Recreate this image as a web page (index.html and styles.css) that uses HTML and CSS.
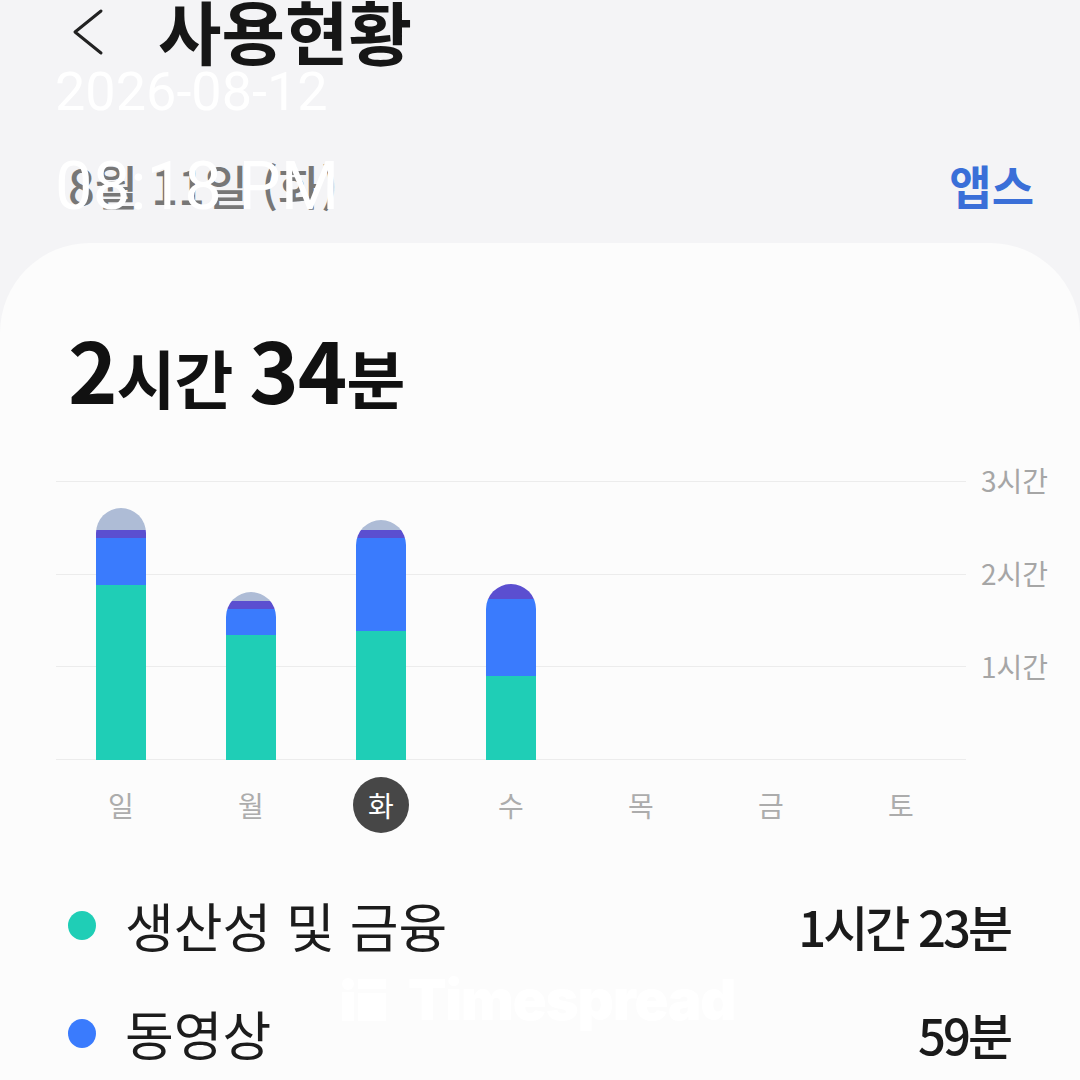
FILE: index.html
```html
<!DOCTYPE html>
<html lang="ko">
<head>
  <meta charset="UTF-8">
  <title>사용현황</title>
  <link rel="stylesheet" href="styles.css">
</head>
<body>
  <header class="topbar">
    <svg class="back" width="36" height="50" viewBox="0 0 36 50">
      <polyline points="31,4 5,25 31,46" fill="none" stroke="#222" stroke-width="3" stroke-linecap="round" stroke-linejoin="round"/>
    </svg>
    <h1>사용현황</h1>
  </header>

  <div class="daterow">
    <span class="date">8월 11일 (화)</span>
    <span class="apps">앱스</span>
  </div>

  <div class="stamp">
    <div class="stamp-date">2026-08-12</div>
    <div class="stamp-time">08:18 PM</div>
  </div>

  <main class="card">
    <div class="total"><span class="num">2</span>시간 <span class="num">34</span>분</div>

    <div class="chart">
      <div class="plot">
        <div class="col">
          <div class="bar">
            <div class="seg other" style="height:22px"></div>
            <div class="seg social" style="height:8px"></div>
            <div class="seg video" style="height:47px"></div>
            <div class="seg work" style="height:175px"></div>
          </div>
        </div>
        <div class="col">
          <div class="bar">
            <div class="seg other" style="height:9px"></div>
            <div class="seg social" style="height:8px"></div>
            <div class="seg video" style="height:26px"></div>
            <div class="seg work" style="height:125px"></div>
          </div>
        </div>
        <div class="col">
          <div class="bar">
            <div class="seg other" style="height:10px"></div>
            <div class="seg social" style="height:8px"></div>
            <div class="seg video" style="height:93px"></div>
            <div class="seg work" style="height:129px"></div>
          </div>
        </div>
        <div class="col">
          <div class="bar">
            <div class="seg social" style="height:15px"></div>
            <div class="seg video" style="height:77px"></div>
            <div class="seg work" style="height:84px"></div>
          </div>
        </div>
        <div class="col"></div>
        <div class="col"></div>
        <div class="col"></div>
      </div>
      <div class="axis">
        <span>3시간</span>
        <span>2시간</span>
        <span>1시간</span>
      </div>
    </div>

    <div class="days">
      <span>일</span>
      <span>월</span>
      <span class="today">화</span>
      <span>수</span>
      <span>목</span>
      <span>금</span>
      <span>토</span>
    </div>

    <ul class="legend">
      <li>
        <span class="dot work"></span>
        <span class="name">생산성 및 금융</span>
        <span class="time">1시간 23분</span>
      </li>
      <li>
        <span class="dot video"></span>
        <span class="name">동영상</span>
        <span class="time">59분</span>
      </li>
    </ul>

    <div class="watermark">
      <svg width="46" height="44" viewBox="0 0 46 44">
        <circle cx="6" cy="6" r="6" fill="#fff"/>
        <rect x="0" y="14" width="12" height="29" fill="#fff"/>
        <rect x="16" y="1" width="28" height="10" fill="#fff"/>
        <rect x="16" y="15" width="28" height="28" fill="#fff"/>
      </svg>
      <span>Timespread</span>
    </div>
  </main>
</body>
</html>
```

FILE: styles.css
```css
body {
  margin: 0;
  background: #f4f4f6;
  font-family: 'Noto Sans CJK KR', 'Noto Sans', sans-serif;
  color: #1f1f1f;
  width: 1080px;
  height: 1080px;
  overflow: hidden;
  position: relative;
}

.topbar {
  display: flex;
  align-items: center;
  gap: 54px;
  padding-left: 70px;
  height: 66px;
}

.back {
  display: block;
  margin-top: -2px;
}

h1 {
  margin: -6px 0 0 -2px;
  font-size: 69px;
  font-weight: 700;
  line-height: 66px;
  color: #161616;
}

.daterow {
  display: flex;
  justify-content: space-between;
  align-items: center;
  padding: 0 46px 0 70px;
  margin-top: 86px;
  height: 64px;
}

.date {
  font-size: 47px;
  font-weight: 500;
  color: #777;
  margin-left: -2px;
}

.apps {
  font-size: 46px;
  font-weight: 700;
  color: #3a6fd8;
}

.stamp {
  position: absolute;
  left: 55px;
  top: 62px;
  color: #fff;
  font-family: Roboto, sans-serif;
  font-weight: 400;
}

.stamp-date {
  font-size: 54px;
  line-height: 60px;
}

.stamp-time {
  font-size: 67px;
  line-height: 76px;
  margin-top: 26px;
}

.card {
  margin-top: 27px;
  background: #fcfcfc;
  border-radius: 90px 90px 0 0;
  height: 900px;
  padding-top: 75px;
  box-sizing: border-box;
  position: relative;
}

.total {
  padding-left: 68px;
  font-size: 64px;
  font-weight: 700;
  line-height: 100px;
  color: #111;
  letter-spacing: -1px;
}

.total .num {
  font-size: 84px;
}

.chart {
  display: flex;
  margin-top: 55px;
  padding-left: 56px;
}

.plot {
  display: grid;
  grid-template-columns: repeat(7, 130px);
  align-items: end;
  height: 279px;
  background: repeating-linear-gradient(to bottom, #ececec 0, #ececec 1px, transparent 1px, transparent 92.67px);
}

.col {
  display: flex;
  justify-content: center;
}

.bar {
  width: 50px;
  display: flex;
  flex-direction: column;
  border-radius: 25px 25px 0 0;
  overflow: hidden;
}

.seg.other { background: #aebcd6; }
.seg.social { background: #5b4fd0; }
.seg.video { background: #3a7bfd; }
.seg.work { background: #1fceb6; }

.axis {
  display: flex;
  flex-direction: column;
  gap: 61px;
  margin-top: -17px;
  margin-left: 15px;
}

.axis span {
  font-size: 28px;
  line-height: 32px;
  color: #a6a6a6;
}

.days {
  display: grid;
  grid-template-columns: repeat(7, 130px);
  margin-left: 56px;
  margin-top: 17px;
  height: 56px;
  align-items: center;
  justify-items: center;
}

.days span {
  font-size: 28px;
  color: #acacac;
}

.days .today {
  width: 56px;
  height: 56px;
  border-radius: 50%;
  background: #474747;
  color: #fff;
  display: flex;
  align-items: center;
  justify-content: center;
}

.legend {
  list-style: none;
  margin: 38px 0 0;
  padding: 0 70px 0 68px;
}

.legend li {
  display: flex;
  align-items: center;
  height: 108px;
}

.dot {
  width: 28px;
  height: 29px;
  border-radius: 50%;
  margin-right: 29px;
}

.dot.work { background: #1fceb6; }
.dot.video { background: #3a7bfd; }

.name {
  font-size: 53px;
  color: #1c1c1c;
  flex: 1;
}

.time {
  font-size: 49px;
  font-weight: 500;
  letter-spacing: -3px;
  color: #1a1a1a;
}

.watermark {
  position: absolute;
  left: 342px;
  top: 723px;
  display: flex;
  align-items: center;
  gap: 20px;
  color: #fff;
}

.watermark span {
  font-family: Inter, sans-serif;
  font-weight: 900;
  font-size: 56px;
  letter-spacing: -1px;
}
```
